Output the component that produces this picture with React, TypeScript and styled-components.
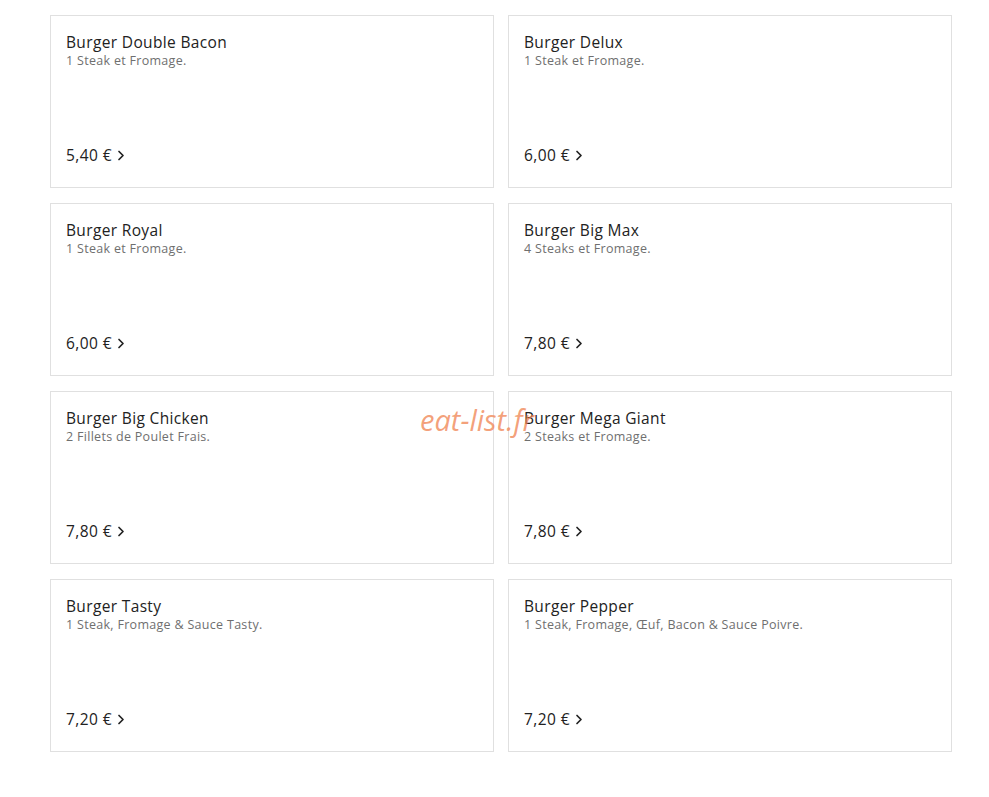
import React from "react";
import styled, { createGlobalStyle } from "styled-components";

const Global = createGlobalStyle`
  html, body { margin: 0; padding: 0; background: #ffffff; }
  body { font-family: "Open Sans", "Liberation Sans", sans-serif; }
`;

const Page = styled.div`
  position: relative;
  padding: 15px 0 0 50px;
  width: 903px;
`;

const Grid = styled.div`
  display: grid;
  grid-template-columns: 444px 444px;
  column-gap: 14px;
  row-gap: 15px;
`;

const Card = styled.div`
  box-sizing: border-box;
  height: 173px;
  border: 1px solid #e0e0e0;
  background: #fff;
  padding: 15px 15px 21px 15px;
  display: flex;
  flex-direction: column;
  justify-content: space-between;
`;

const Title = styled.div`
  font-size: 15.5px;
  line-height: 22px;
  color: #222;
  letter-spacing: 0.35px;
`;

const Desc = styled.div`
  font-size: 12.5px;
  line-height: 16px;
  color: #6f6f6f;
  letter-spacing: 0.3px;
`;

const Price = styled.div`
  display: flex;
  align-items: center;
  gap: 5px;
  font-size: 15.5px;
  line-height: 22px;
  color: #222;
  letter-spacing: 0.4px;
`;

const Watermark = styled.div`
  position: absolute;
  left: 420px;
  top: 400px;
  font-family: "Open Sans", sans-serif;
  font-style: italic;
  font-size: 29px;
  color: rgba(240, 130, 80, 0.75);
  pointer-events: none;
`;

const Chevron = () => (
  <svg width="8" height="11" viewBox="0 0 8 11" fill="none">
    <path d="M2 1.5 L6 5.5 L2 9.5" stroke="#222" strokeWidth="1.7" strokeLinecap="round" strokeLinejoin="round" />
  </svg>
);

const items = [
  { t: "Burger Double Bacon", d: "1 Steak et Fromage.", p: "5,40 €" },
  { t: "Burger Delux", d: "1 Steak et Fromage.", p: "6,00 €" },
  { t: "Burger Royal", d: "1 Steak et Fromage.", p: "6,00 €" },
  { t: "Burger Big Max", d: "4 Steaks et Fromage.", p: "7,80 €" },
  { t: "Burger Big Chicken", d: "2 Fillets de Poulet Frais.", p: "7,80 €" },
  { t: "Burger Mega Giant", d: "2 Steaks et Fromage.", p: "7,80 €" },
  { t: "Burger Tasty", d: "1 Steak, Fromage & Sauce Tasty.", p: "7,20 €" },
  { t: "Burger Pepper", d: "1 Steak, Fromage, Œuf, Bacon & Sauce Poivre.", p: "7,20 €" },
];

export default function App() {
  return (
    <>
      <Global />
      <Page>
        <Grid>
          {items.map((it) => (
            <Card key={it.t}>
              <div>
                <Title>{it.t}</Title>
                <Desc>{it.d}</Desc>
              </div>
              <Price>
                {it.p}
                <Chevron />
              </Price>
            </Card>
          ))}
        </Grid>
        <Watermark>eat-list.fr</Watermark>
      </Page>
    </>
  );
}
